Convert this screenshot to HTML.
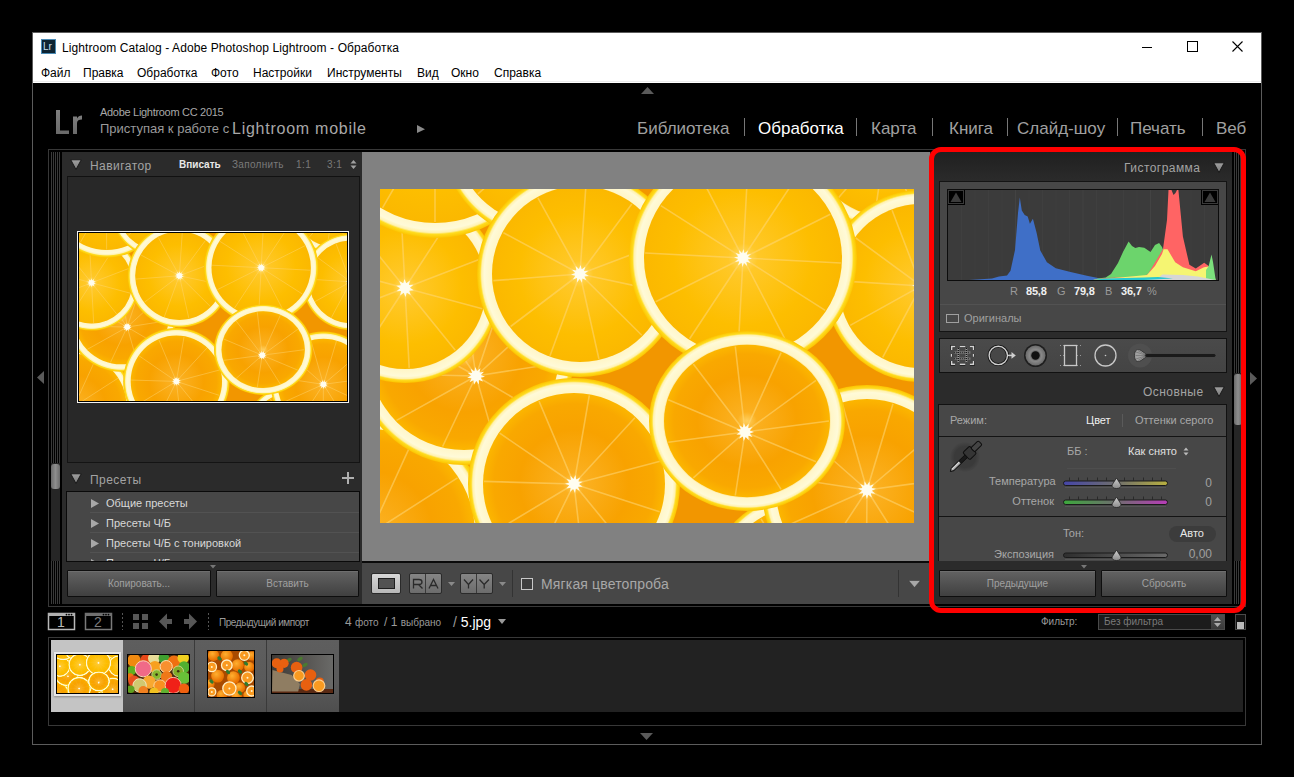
<!DOCTYPE html>
<html><head><meta charset="utf-8">
<style>
*{box-sizing:border-box;margin:0;padding:0}
html,body{width:1294px;height:777px;overflow:hidden;background:#000;font-family:"Liberation Sans",sans-serif}
.a{position:absolute}
.t{position:absolute;white-space:nowrap;line-height:1}
.btn{background:linear-gradient(#626262,#404040);border:1px solid #0e0e0e;border-radius:1px;box-shadow:inset 0 1px 0 #6e6e6e}
.btn span{position:absolute;left:0;right:0;top:8px;text-align:center;font-size:10px;color:#a0a0a0;line-height:1}
</style></head>
<body>
<!--ORANGES-->
<svg width="0" height="0" style="position:absolute"><defs>
<radialGradient id="fl" cx="0.5" cy="0.5" r="0.5"><stop offset="0" stop-color="#ffde70"/><stop offset="0.15" stop-color="#ffc828"/><stop offset="0.7" stop-color="#fdbe00"/><stop offset="1" stop-color="#fbb800"/></radialGradient>
<radialGradient id="fl2" cx="0.5" cy="0.5" r="0.5"><stop offset="0" stop-color="#ffd060"/><stop offset="0.12" stop-color="#fbb020"/><stop offset="0.6" stop-color="#f8a200"/><stop offset="0.88" stop-color="#f9a800"/><stop offset="1" stop-color="#fcb600"/></radialGradient>
<radialGradient id="pi" cx="0.5" cy="0.5" r="0.5"><stop offset="0.82" stop-color="#fdd050"/><stop offset="0.86" stop-color="#fff6c8"/><stop offset="0.93" stop-color="#fffad8"/><stop offset="0.955" stop-color="#fff2b0"/><stop offset="0.97" stop-color="#ffdc20"/><stop offset="1" stop-color="#fcc400"/></radialGradient>
<g id="oranges"><rect width="534" height="334" fill="#f29600"/>
<g><ellipse cx="420" cy="395" rx="90" ry="90" fill="url(#pi)"/><ellipse cx="420" cy="395" rx="77.0" ry="77.0" fill="url(#fl2)"/><path d="M420.0 395.0L494.8 408.2M420.0 395.0L475.8 446.6M420.0 395.0L439.1 468.6M420.0 395.0L396.3 467.2M420.0 395.0L361.0 442.9M420.0 395.0L344.5 403.4M420.0 395.0L351.9 361.3M420.0 395.0L381.0 329.8M420.0 395.0L422.4 319.0M420.0 395.0L463.1 332.4M420.0 395.0L490.1 365.6" stroke="#ffd878" stroke-width="1.6" opacity="0.55"/><polygon points="428.9,396.6 424.5,397.2 426.6,401.1 422.6,399.3 422.3,403.7 419.8,400.0 417.2,403.6 417.2,399.1 413.0,400.7 415.4,396.9 411.1,396.0 415.1,394.1 411.9,391.0 416.3,391.6 415.4,387.3 418.7,390.2 420.3,386.0 421.6,390.2 425.1,387.6 423.9,391.8 428.3,391.5 425.0,394.4" fill="#fffbe8"/><circle cx="420" cy="395" r="5" fill="#fffdf0"/></g>
<g><ellipse cx="-10" cy="345" rx="120" ry="120" fill="url(#pi)"/><ellipse cx="-10" cy="345" rx="105.0" ry="105.0" fill="url(#fl2)"/><path d="M-10.0 345.0L94.0 345.0M-10.0 345.0L77.5 401.2M-10.0 345.0L33.2 439.6M-10.0 345.0L-24.8 447.9M-10.0 345.0L-78.1 423.6M-10.0 345.0L-109.8 374.3M-10.0 345.0L-109.8 315.7M-10.0 345.0L-78.1 266.4M-10.0 345.0L-24.8 242.1M-10.0 345.0L33.2 250.4M-10.0 345.0L77.5 288.8" stroke="#ffd878" stroke-width="1.6" opacity="0.55"/><polygon points="-1.0,345.0 -5.2,346.4 -2.4,349.9 -6.7,348.8 -6.3,353.2 -9.3,349.9 -11.3,353.9 -12.1,349.5 -15.9,351.8 -14.2,347.7 -18.6,347.5 -15.0,345.0 -18.6,342.5 -14.2,342.3 -15.9,338.2 -12.1,340.5 -11.3,336.1 -9.3,340.1 -6.3,336.8 -6.7,341.2 -2.4,340.1 -5.2,343.6" fill="#fffbe8"/><circle cx="-10" cy="345" r="5" fill="#fffdf0"/></g>
<g><ellipse cx="84" cy="166" rx="110" ry="110" fill="url(#pi)"/><ellipse cx="84" cy="166" rx="95.0" ry="95.0" fill="url(#fl2)"/><path d="M96.0 187.0L177.6 174.2M96.0 187.0L158.3 223.5M96.0 187.0L115.4 254.6M96.0 187.0L62.6 257.5M96.0 187.0L16.5 231.4M96.0 187.0L-8.2 184.5M96.0 187.0L-3.5 131.8M96.0 187.0L28.9 89.9M96.0 187.0L78.8 72.1M96.0 187.0L130.4 84.2M96.0 187.0L167.2 122.3" stroke="#ffd878" stroke-width="1.6" opacity="0.55"/><polygon points="105.0,187.8 100.7,188.8 103.1,192.5 98.9,191.0 99.0,195.5 96.3,192.0 93.9,195.8 93.5,191.3 89.5,193.3 91.6,189.3 87.2,188.8 91.0,186.6 87.6,183.7 92.0,183.9 90.7,179.7 94.3,182.3 95.5,178.0 97.1,182.1 100.4,179.2 99.6,183.5 104.0,182.8 100.9,186.0" fill="#fffbe8"/><circle cx="96" cy="187" r="5" fill="#fffdf0"/></g>
<g><ellipse cx="25" cy="99" rx="95" ry="95" fill="url(#pi)"/><ellipse cx="25" cy="99" rx="81.0" ry="81.0" fill="url(#fl)"/><path d="M25.0 99.0L102.3 119.7M25.0 99.0L75.3 161.2M25.0 99.0L29.2 178.9M25.0 99.0L-18.6 166.1M25.0 99.0L-49.7 127.7M25.0 99.0L-52.3 78.3M25.0 99.0L-25.3 36.8M25.0 99.0L20.8 19.1M25.0 99.0L68.6 31.9M25.0 99.0L99.7 70.3" stroke="#ffd878" stroke-width="1.6" opacity="0.55"/><polygon points="33.7,101.3 29.2,101.7 30.7,106.0 26.8,103.7 25.5,108.0 23.7,103.8 20.1,106.5 21.1,102.1 16.6,102.2 20.0,99.3 16.3,96.7 20.8,96.3 19.3,92.0 23.2,94.3 24.5,90.0 26.3,94.2 29.9,91.5 28.9,95.9 33.4,95.8 30.0,98.7" fill="#fffbe8"/><circle cx="25" cy="99" r="5" fill="#fffdf0"/></g>
<g><ellipse cx="55" cy="-72" rx="121" ry="121" fill="url(#pi)"/><ellipse cx="55" cy="-72" rx="106.0" ry="106.0" fill="url(#fl)"/><path d="M55.0 -72.0L160.0 -72.0M55.0 -72.0L145.9 -19.5M55.0 -72.0L107.5 18.9M55.0 -72.0L55.0 33.0M55.0 -72.0L2.5 18.9M55.0 -72.0L-35.9 -19.5M55.0 -72.0L-50.0 -72.0M55.0 -72.0L-35.9 -124.5M55.0 -72.0L2.5 -162.9M55.0 -72.0L55.0 -177.0M55.0 -72.0L107.5 -162.9M55.0 -72.0L145.9 -124.5" stroke="#ffd878" stroke-width="1.6" opacity="0.55"/><polygon points="64.0,-72.0 59.8,-70.7 62.8,-67.5 58.5,-68.5 59.5,-64.2 56.3,-67.2 55.0,-63.0 53.7,-67.2 50.5,-64.2 51.5,-68.5 47.2,-67.5 50.2,-70.7 46.0,-72.0 50.2,-73.3 47.2,-76.5 51.5,-75.5 50.5,-79.8 53.7,-76.8 55.0,-81.0 56.3,-76.8 59.5,-79.8 58.5,-75.5 62.8,-76.5 59.8,-73.3" fill="#fffbe8"/><circle cx="55" cy="-72" r="5" fill="#fffdf0"/></g>
<g><ellipse cx="162" cy="-51" rx="100" ry="100" fill="url(#pi)"/><ellipse cx="162" cy="-51" rx="86.0" ry="86.0" fill="url(#fl)"/><path d="M162.0 -51.0L246.2 -39.2M162.0 -51.0L226.4 4.5M162.0 -51.0L186.2 30.5M162.0 -51.0L138.3 30.6M162.0 -51.0L97.9 4.9M162.0 -51.0L77.9 -38.6M162.0 -51.0L84.6 -86.1M162.0 -51.0L115.8 -122.4M162.0 -51.0L161.7 -136.0M162.0 -51.0L207.7 -122.7M162.0 -51.0L239.2 -86.6" stroke="#ffd878" stroke-width="1.6" opacity="0.55"/><polygon points="170.9,-49.7 166.6,-48.9 168.8,-45.1 164.7,-46.8 164.6,-42.4 162.0,-46.0 159.5,-42.4 159.3,-46.8 155.2,-45.1 157.5,-48.9 153.1,-49.7 157.0,-51.7 153.8,-54.7 158.2,-54.3 157.1,-58.6 160.6,-55.8 162.0,-60.0 163.4,-55.8 166.8,-58.6 165.8,-54.3 170.2,-54.8 166.9,-51.7" fill="#fffbe8"/><circle cx="162" cy="-51" r="5" fill="#fffdf0"/></g>
<g><ellipse cx="200" cy="85" rx="103" ry="103" fill="url(#pi)"/><ellipse cx="200" cy="85" rx="88.0" ry="88.0" fill="url(#fl)"/><path d="M200.0 85.0L285.1 103.1M200.0 85.0L261.8 146.2M200.0 85.0L218.9 169.9M200.0 85.0L170.0 166.7M200.0 85.0L130.6 137.5M200.0 85.0L113.3 91.6M200.0 85.0L123.4 43.7M200.0 85.0L157.9 8.8M200.0 85.0L205.8 -1.8M200.0 85.0L251.8 15.1M200.0 85.0L281.4 54.2" stroke="#ffd878" stroke-width="1.6" opacity="0.55"/><polygon points="208.8,86.9 204.4,87.4 206.4,91.3 202.4,89.4 202.0,93.8 199.7,90.0 196.9,93.4 197.0,89.0 192.8,90.4 195.3,86.8 191.0,85.7 195.1,84.0 192.1,80.7 196.4,81.5 195.6,77.1 198.9,80.1 200.6,76.0 201.7,80.3 205.4,77.8 204.0,82.0 208.4,81.8 205.0,84.6" fill="#fffbe8"/><circle cx="200" cy="85" r="5" fill="#fffdf0"/></g>
<g><ellipse cx="505" cy="-45" rx="85" ry="85" fill="url(#pi)"/><ellipse cx="505" cy="-45" rx="72.0" ry="72.0" fill="url(#fl)"/><path d="M505.0 -45.0L576.0 -45.0M505.0 -45.0L564.7 -6.6M505.0 -45.0L534.5 19.6M505.0 -45.0L494.9 25.3M505.0 -45.0L458.5 8.7M505.0 -45.0L436.9 -25.0M505.0 -45.0L436.9 -65.0M505.0 -45.0L458.5 -98.7M505.0 -45.0L494.9 -115.3M505.0 -45.0L534.5 -109.6M505.0 -45.0L564.7 -83.4" stroke="#ffd878" stroke-width="1.6" opacity="0.55"/><polygon points="514.0,-45.0 509.8,-43.6 512.6,-40.1 508.3,-41.2 508.7,-36.8 505.7,-40.1 503.7,-36.1 502.9,-40.5 499.1,-38.2 500.8,-42.3 496.4,-42.5 500.0,-45.0 496.4,-47.5 500.8,-47.7 499.1,-51.8 502.9,-49.5 503.7,-53.9 505.7,-49.9 508.7,-53.2 508.3,-48.8 512.6,-49.9 509.8,-46.4" fill="#fffbe8"/><circle cx="505" cy="-45" r="5" fill="#fffdf0"/></g>
<g><ellipse cx="541" cy="97" rx="96" ry="96" fill="url(#pi)"/><ellipse cx="541" cy="97" rx="82.0" ry="82.0" fill="url(#fl)"/><path d="M541.0 97.0L617.1 124.7M541.0 97.0L590.1 161.5M541.0 97.0L547.4 177.7M541.0 97.0L502.7 168.4M541.0 97.0L470.2 136.4M541.0 97.0L460.2 91.9M541.0 97.0L475.8 49.0M541.0 97.0L512.1 21.3M541.0 97.0L557.6 17.7M541.0 97.0L597.8 39.3M541.0 97.0L620.0 79.2" stroke="#ffd878" stroke-width="1.6" opacity="0.55"/><polygon points="549.5,100.1 545.0,100.0 546.5,104.2 542.8,101.7 541.7,106.0 540.0,101.9 536.7,104.9 537.5,100.6 533.1,101.4 536.1,98.1 532.0,96.4 536.3,95.3 533.8,91.7 538.0,93.0 537.8,88.6 540.6,92.0 542.8,88.2 543.4,92.6 547.3,90.6 545.4,94.6 549.8,95.0 546.0,97.3" fill="#fffbe8"/><circle cx="541" cy="97" r="5" fill="#fffdf0"/></g>
<g><ellipse cx="363" cy="69" rx="114" ry="112" fill="url(#pi)"/><ellipse cx="363" cy="69" rx="99.0" ry="97.3" fill="url(#fl)"/><path d="M363.0 69.0L460.9 74.0M363.0 69.0L445.2 121.4M363.0 69.0L407.5 154.8M363.0 69.0L357.9 165.1M363.0 69.0L309.6 149.7M363.0 69.0L275.7 112.7M363.0 69.0L265.1 64.0M363.0 69.0L280.8 16.6M363.0 69.0L318.5 -16.8M363.0 69.0L368.1 -27.1M363.0 69.0L416.4 -11.7M363.0 69.0L450.3 25.3" stroke="#ffd878" stroke-width="1.6" opacity="0.55"/><polygon points="372.0,69.5 367.8,70.5 370.5,73.9 366.3,72.7 367.1,77.0 364.0,73.9 362.5,78.0 361.5,73.8 358.1,76.5 359.3,72.3 355.0,73.1 358.1,70.0 354.0,68.5 358.2,67.5 355.5,64.1 359.7,65.3 358.9,61.0 362.0,64.1 363.5,60.0 364.5,64.2 367.9,61.5 366.7,65.7 371.0,64.9 367.9,68.0" fill="#fffbe8"/><circle cx="363" cy="69" r="5" fill="#fffdf0"/></g>
<g><ellipse cx="487" cy="301" rx="105" ry="105" fill="url(#pi)"/><ellipse cx="487" cy="301" rx="91.0" ry="91.0" fill="url(#fl2)"/><path d="M487.0 301.0L568.6 339.0M487.0 301.0L535.1 377.1M487.0 301.0L486.3 391.0M487.0 301.0L437.7 376.3M487.0 301.0L404.8 337.7M487.0 301.0L398.0 287.5M487.0 301.0L419.5 241.5M487.0 301.0L462.3 214.4M487.0 301.0L513.0 214.8M487.0 301.0L555.5 242.6M487.0 301.0L576.2 288.9" stroke="#ffd878" stroke-width="1.6" opacity="0.55"/><polygon points="495.2,304.8 490.8,304.3 491.8,308.6 488.4,305.8 486.9,310.0 485.6,305.8 482.1,308.5 483.2,304.2 478.8,304.7 482.0,301.7 478.1,299.6 482.5,298.9 480.2,295.1 484.3,296.8 484.5,292.3 487.0,296.0 489.6,292.4 489.7,296.8 493.8,295.2 491.6,299.0 495.9,299.8 491.9,301.8" fill="#fffbe8"/><circle cx="487" cy="301" r="5" fill="#fffdf0"/></g>
<g><ellipse cx="194" cy="295" rx="106" ry="106" fill="url(#pi)"/><ellipse cx="194" cy="295" rx="91.0" ry="91.0" fill="url(#fl2)"/><path d="M194.0 295.0L279.6 322.8M194.0 295.0L251.0 364.7M194.0 295.0L204.3 384.4M194.0 295.0L154.3 375.8M194.0 295.0L116.9 341.5M194.0 295.0L104.0 292.4M194.0 295.0L119.7 244.2M194.0 295.0L159.0 212.1M194.0 295.0L209.3 206.3M194.0 295.0L254.9 228.7M194.0 295.0L281.0 272.1" stroke="#ffd878" stroke-width="1.6" opacity="0.55"/><polygon points="202.6,297.8 198.1,297.8 199.7,302.0 195.9,299.6 195.0,303.9 193.1,299.9 190.0,303.1 190.6,298.7 186.3,299.6 189.2,296.3 185.0,294.7 189.2,293.5 186.6,289.9 190.8,291.1 190.5,286.7 193.4,290.0 195.5,286.1 196.2,290.5 200.1,288.4 198.3,292.4 202.7,292.7 199.0,295.1" fill="#fffbe8"/><circle cx="194" cy="295" r="5" fill="#fffdf0"/></g>
<g><ellipse cx="367" cy="232" rx="98" ry="90" fill="url(#pi)"/><ellipse cx="367" cy="232" rx="83.0" ry="76.2" fill="url(#fl2)"/><path d="M365.0 243.0L449.0 232.0M365.0 243.0L436.0 272.7M365.0 243.0L401.1 300.4M365.0 243.0L355.3 306.5M365.0 243.0L313.3 288.9M365.0 243.0L288.3 253.2M365.0 243.0L288.3 210.8M365.0 243.0L313.3 175.1M365.0 243.0L355.3 157.5M365.0 243.0L401.1 163.6M365.0 243.0L436.0 191.3" stroke="#ffd878" stroke-width="1.6" opacity="0.55"/><polygon points="374.0,243.0 369.8,244.4 372.6,247.9 368.3,246.8 368.7,251.2 365.7,247.9 363.7,251.9 362.9,247.5 359.1,249.8 360.8,245.7 356.4,245.5 360.0,243.0 356.4,240.5 360.8,240.3 359.1,236.2 362.9,238.5 363.7,234.1 365.7,238.1 368.7,234.8 368.3,239.2 372.6,238.1 369.8,241.6" fill="#fffbe8"/><circle cx="365" cy="243" r="5" fill="#fffdf0"/></g>
</g></defs></svg>
<!--/ORANGES-->
<!-- window frame -->
<div class="a" style="left:32px;top:32px;width:1230px;height:713px;border:1px solid #5c5c5c;background:#000"></div>
<!-- title + menu -->
<div class="a" style="left:33px;top:33px;width:1228px;height:50px;background:#fff"></div><div class="a" style="left:33px;top:81px;width:1228px;height:1px;background:#ececec"></div>
<!-- title bar -->
<div class="a" style="left:41px;top:39px;width:15px;height:15px;background:#0e2433;border:1px solid #4a8bb5"></div>
<div class="t" style="left:43px;top:42px;font-size:10px;color:#c8e0f0">Lr</div>
<div class="t" style="left:62px;top:42px;font-size:12px;letter-spacing:0.1px;color:#000">Lightroom Catalog - Adobe Photoshop Lightroom - Обработка</div>
<div class="a" style="left:1142px;top:47px;width:10px;height:1px;background:#000"></div>
<div class="a" style="left:1187px;top:41px;width:11px;height:11px;border:1px solid #000"></div>
<svg class="a" style="left:1232px;top:41px" width="11" height="11"><path d="M0.5 0.5L10.5 10.5M10.5 0.5L0.5 10.5" stroke="#000" stroke-width="1.1"/></svg>
<!-- menu -->
<div class="t" style="left:41px;top:67px;font-size:12px;color:#000">Файл</div>
<div class="t" style="left:83px;top:67px;font-size:12px;color:#000">Правка</div>
<div class="t" style="left:137px;top:67px;font-size:12px;color:#000">Обработка</div>
<div class="t" style="left:211px;top:67px;font-size:12px;color:#000">Фото</div>
<div class="t" style="left:253px;top:67px;font-size:12px;color:#000">Настройки</div>
<div class="t" style="left:327px;top:67px;font-size:12px;color:#000">Инструменты</div>
<div class="t" style="left:417px;top:67px;font-size:12px;color:#000">Вид</div>
<div class="t" style="left:451px;top:67px;font-size:12px;color:#000">Окно</div>
<div class="t" style="left:494px;top:67px;font-size:12px;color:#000">Справка</div>
<!-- header -->
<svg class="a" style="left:641px;top:87px" width="13" height="7"><path d="M6.5 0L13 7H0z" fill="#5a5a5a"/></svg>
<svg class="a" style="left:55px;top:109px" width="28" height="26"><defs><linearGradient id="lrg" x1="0" y1="0" x2="0" y2="1"><stop offset="0" stop-color="#7e7e7e"/><stop offset="1" stop-color="#6a6a6a"/></linearGradient></defs><path d="M1 1H5V21.5H14V25H1z" fill="url(#lrg)"/><path d="M18 7.5H22V9.5C23 7.5 24.5 6.5 27 6.5V10.5C24 10.5 22 11.5 22 14V25H18z" fill="url(#lrg)"/></svg>
<div class="t" style="left:100px;top:107px;font-size:11px;color:#a8a8a8;letter-spacing:-0.3px">Adobe Lightroom CC 2015</div>
<div class="t" style="left:100px;top:122px;font-size:13px;color:#9a9a9a">Приступая к работе с</div>
<div class="t" style="left:232px;top:121px;font-size:16px;letter-spacing:0.75px;color:#a8a8a8">Lightroom mobile</div>
<svg class="a" style="left:417px;top:125px" width="8" height="8"><path d="M0 0L8 4.2L0 8z" fill="#8a8a8a"/></svg>
<!-- module picker -->
<div class="t" style="left:637px;top:120px;font-size:17px;color:#a0a0a0">Библиотека</div>
<div class="a" style="left:744px;top:118px;width:1px;height:18px;background:#777"></div>
<div class="t" style="left:758px;top:120px;font-size:17px;color:#fff">Обработка</div>
<div class="a" style="left:856px;top:118px;width:1px;height:18px;background:#777"></div>
<div class="t" style="left:871px;top:120px;font-size:17px;color:#a0a0a0">Карта</div>
<div class="a" style="left:932px;top:118px;width:1px;height:18px;background:#777"></div>
<div class="t" style="left:949px;top:120px;font-size:17px;color:#a0a0a0">Книга</div>
<div class="a" style="left:1007px;top:118px;width:1px;height:18px;background:#777"></div>
<div class="t" style="left:1017px;top:120px;font-size:17px;color:#a0a0a0">Слайд-шоу</div>
<div class="a" style="left:1117px;top:118px;width:1px;height:18px;background:#777"></div>
<div class="t" style="left:1130px;top:120px;font-size:17px;color:#a0a0a0">Печать</div>
<div class="a" style="left:1202px;top:118px;width:1px;height:18px;background:#777"></div>
<div class="t" style="left:1216px;top:120px;font-size:17px;color:#a0a0a0">Веб</div>
<!-- panels frame -->
<div class="a" style="left:48px;top:149px;width:1198px;height:458px;border:1px solid #383838"></div>
<!-- left strip -->
<div class="a" style="left:51px;top:152px;width:9px;height:311px;background:repeating-linear-gradient(90deg,#3a3a3a 0 1px,#000 1px 2px)"></div>
<div class="a" style="left:51px;top:463px;width:9px;height:98px;background:#262626"></div>
<div class="a" style="left:51px;top:464px;width:9px;height:25px;border-radius:3px;background:linear-gradient(90deg,#6a6a6a,#8e8e8e 50%,#6a6a6a)"></div>
<div class="a" style="left:51px;top:561px;width:9px;height:43px;background:repeating-linear-gradient(90deg,#3a3a3a 0 1px,#000 1px 2px)"></div>
<!-- left panel -->
<div class="a" style="left:62px;top:152px;width:300px;height:452px;background:#2b2b2b"></div>
<svg class="a" style="left:70px;top:159px" width="12" height="11"><path d="M0.8 0.8H11.2L6 10.5z" fill="url(#tg)" stroke="#151515" stroke-width="0.9"/><defs><linearGradient id="tg" x1="0" y1="0" x2="0" y2="1"><stop offset="0" stop-color="#a0a0a0"/><stop offset="1" stop-color="#7a7a7a"/></linearGradient></defs></svg>
<div class="t" style="left:90px;top:160px;font-size:12px;color:#a3a3a3;letter-spacing:0.45px">Навигатор</div>
<div class="t" style="left:179px;top:160px;font-size:10px;font-weight:bold;color:#e8e8e8">Вписать</div>
<div class="t" style="left:232px;top:160px;font-size:10px;color:#7a7a7a;letter-spacing:0.3px">Заполнить</div>
<div class="t" style="left:296px;top:160px;font-size:10px;color:#7a7a7a;letter-spacing:0.5px">1:1</div>
<div class="t" style="left:327px;top:160px;font-size:10px;color:#7a7a7a;letter-spacing:0.5px">3:1</div>
<svg class="a" style="left:350px;top:160px" width="7" height="9"><path d="M3.5 0L6.5 3.5H0.5zM3.5 9L6.5 5.5H0.5z" fill="#a0a0a0"/></svg>
<div class="a" style="left:67px;top:176px;width:293px;height:287px;background:#282828;border:1px solid #141414;border-top-color:#111"></div>
<div class="a" style="left:77px;top:231px;width:272px;height:172px;border:1px solid #f4f4f4;background:#000;padding:1px;overflow:hidden"><svg style="display:block" width="268" height="168" viewBox="0 0 534 334" preserveAspectRatio="none"><use href="#oranges"/></svg></div>
<svg class="a" style="left:70px;top:473px" width="12" height="11"><path d="M0.8 0.8H11.2L6 10.5z" fill="url(#tg)" stroke="#151515" stroke-width="0.9"/></svg>
<div class="t" style="left:90px;top:474px;font-size:12px;color:#a3a3a3;letter-spacing:0.45px">Пресеты</div>
<svg class="a" style="left:342px;top:472px" width="12" height="12"><path d="M6 0V12M0 6H12" stroke="#b0b0b0" stroke-width="2"/></svg>
<div class="a" style="left:66px;top:491px;width:294px;height:71px;background:#474747;border:1px solid #0a0a0a;overflow:hidden">
 <div class="a" style="left:23px;top:20px;width:270px;height:1px;background:#525252"></div>
 <div class="a" style="left:23px;top:40px;width:270px;height:1px;background:#525252"></div>
 <div class="a" style="left:23px;top:60px;width:270px;height:1px;background:#525252"></div>
 <svg class="a" style="left:24px;top:7px" width="8" height="9"><path d="M0 0L8 4.5L0 9z" fill="#a8a8a8"/></svg>
 <svg class="a" style="left:24px;top:27px" width="8" height="9"><path d="M0 0L8 4.5L0 9z" fill="#a8a8a8"/></svg>
 <svg class="a" style="left:24px;top:47px" width="8" height="9"><path d="M0 0L8 4.5L0 9z" fill="#a8a8a8"/></svg>
 <svg class="a" style="left:24px;top:67px" width="8" height="9"><path d="M0 0L8 4.5L0 9z" fill="#a8a8a8"/></svg>
 <div class="t" style="left:39px;top:6px;font-size:11px;color:#d8d8d8">Общие пресеты</div>
 <div class="t" style="left:39px;top:26px;font-size:11px;color:#d8d8d8">Пресеты Ч/Б</div>
 <div class="t" style="left:39px;top:46px;font-size:11px;color:#d8d8d8">Пресеты Ч/Б с тонировкой</div>
 <div class="t" style="left:39px;top:66px;font-size:11px;color:#d8d8d8">Пресеты Ч/Б тон</div>
</div>
<svg class="a" style="left:210px;top:565px" width="6" height="4"><path d="M0 0H6L3 3.5z" fill="#777"/></svg>
<div class="a btn" style="left:67px;top:570px;width:144px;height:27px"><span>Копировать...</span></div>
<div class="a btn" style="left:216px;top:570px;width:143px;height:27px"><span>Вставить</span></div>
<!-- center -->
<div class="a" style="left:362px;top:152px;width:568px;height:409px;background:#818181"></div>
<div class="a" id="mainimg" style="left:380px;top:189px;width:534px;height:334px;background:#f5a300;overflow:hidden"><svg width="534" height="334" viewBox="0 0 534 334"><use href="#oranges"/></svg></div>
<div class="a" style="left:362px;top:561px;width:568px;height:2px;background:#0a0a0a"></div>
<div class="a" style="left:362px;top:563px;width:568px;height:41px;background:#474747"></div>
<div class="a" style="left:371px;top:573px;width:30px;height:21px;border-radius:2px;background:linear-gradient(#d6d6d6,#b8b8b8);border:1px solid #2a2a2a"><div class="a" style="left:6px;top:4px;width:17px;height:11px;background:#525252;border:1px solid #1e1e1e"></div></div>
<div class="a" style="left:409px;top:573px;width:33px;height:21px;border-radius:2px;background:linear-gradient(#858585,#6c6c6c);border:1px solid #2a2a2a"><div class="a" style="left:15px;top:0;width:1px;height:19px;background:#3a3a3a"></div></div>


<svg class="a" style="left:448px;top:582px" width="7" height="4"><path d="M0 0H7L3.5 4z" fill="#8a8a8a"/></svg>
<div class="a" style="left:460px;top:573px;width:33px;height:21px;border-radius:2px;background:linear-gradient(#858585,#6c6c6c);border:1px solid #2a2a2a"><div class="a" style="left:15px;top:0;width:1px;height:19px;background:#3a3a3a"></div></div>


<svg class="a" style="left:499px;top:582px" width="7" height="4"><path d="M0 0H7L3.5 4z" fill="#8a8a8a"/></svg>
<svg class="a" style="left:0;top:0" width="500" height="600"><path d="M413.5 588.5V579.5H419C421 579.5 422 580.5 422 582C422 583.5 421 584.5 419 584.5H413.5M418.5 584.5L422.5 588.5M429 588.5L433.5 579.5L438 588.5M430.8 585.5H436.2M464 579.5L468.5 584.5V588.5M473 579.5L468.5 584.5M479.5 579.5L484.2 584.5V588.5M489 579.5L484.2 584.5" fill="none" stroke="#2a2a2a" stroke-width="1.3"/></svg>
<div class="a" style="left:512px;top:570px;width:1px;height:27px;background:#333"></div>
<div class="a" style="left:521px;top:578px;width:12px;height:12px;border:1px solid #c8c8c8;background:#3e3e3e"></div>
<div class="t" style="left:541px;top:577px;font-size:14px;color:#a8a8a8;letter-spacing:0.15px">Мягкая цветопроба</div>
<div class="a" style="left:898px;top:570px;width:1px;height:27px;background:#333"></div>
<svg class="a" style="left:908px;top:580px" width="13" height="8"><path d="M0.5 0.5H12.5L6.5 7.5z" fill="#a8a8a8" stroke="#333" stroke-width="0.5"/></svg>
<!-- right panel -->
<div class="a" style="left:930px;top:152px;width:302px;height:452px;background:linear-gradient(#202020,#2b2b2b 30px)"></div>
<div class="a" style="left:1234px;top:152px;width:8px;height:221px;background:repeating-linear-gradient(90deg,#3a3a3a 0 1px,#000 1px 2px)"></div>
<div class="a" style="left:1234px;top:373px;width:8px;height:188px;background:#262626"></div>
<div class="a" style="left:1234px;top:374px;width:8px;height:51px;border-radius:3px;background:linear-gradient(90deg,#6a6a6a,#8e8e8e 50%,#6a6a6a)"></div>
<div class="a" style="left:1234px;top:561px;width:8px;height:43px;background:repeating-linear-gradient(90deg,#3a3a3a 0 1px,#000 1px 2px)"></div>
<!-- histogram header -->
<div class="t" style="left:1124px;top:162px;font-size:12px;color:#a3a3a3;letter-spacing:0.45px">Гистограмма</div>
<svg class="a" style="left:1213px;top:162px" width="12" height="11"><path d="M0.8 0.8H11.2L6 10.5z" fill="url(#tg)" stroke="#151515" stroke-width="0.9"/></svg>
<div class="a" style="left:939px;top:181px;width:288px;height:151px;background:#474747;border:1px solid #141414"></div>
<div class="a" style="left:947px;top:189px;width:272px;height:92px;border:1px solid #0c0c0c;background:#3b3b3b;overflow:hidden">
<svg width="270" height="90" style="position:absolute;left:0;top:0">
 <g stroke="#3f3f3f" stroke-width="1">
  <path d="M13.5 0V90M27 0V90M40.5 0V90M54 0V90M81 0V90M94.5 0V90M108 0V90M121.5 0V90M148.5 0V90M162 0V90M175.5 0V90M189 0V90M216 0V90M229.5 0V90M243 0V90M256.5 0V90"/>
 </g>
 <g stroke="#434343" stroke-width="1"><path d="M67.5 0V90M135 0V90M202.5 0V90"/></g>
 <path d="M21 90L44 88.5L51 86.5L59 85.5L62.5 80.7L67 60L70 23L71.8 7.5L73.8 20.5L76.7 25L79.7 26.4L81.9 33.8L84.9 28.7L88.6 42.7L92.3 60.5L98.9 72.3L107.8 78.3L122.6 82L138.9 85.7L150 88L158 89L165 90z" fill="#3f6fc7"/>
 <path d="M145 90L150 88.5L157.7 87.5L163 84L170 73L175 62L180.6 51.6L184 56L187.3 58L191 57L196.3 57.8L202.5 61.9L207 55L211.1 52.9L214 57L216 62L216 90z" fill="#6cd46c"/>
 <path d="M145 90L158 88L170 87.5L196 86L200 84L215 59L219 30L220.5 0H223.5L225.5 5L227.5 3L229 0H230.4L234.9 46.5L241.4 74.8L247.8 78.6L256.2 72.8L260.7 76L260.7 90z" fill="#ff6464"/>
 <path d="M145 90L199 85L207 76L214 64L215.6 59.3L219.5 59.3L227.2 72.2L234.9 77.3L247.8 81.2L256 77.3L260.7 76.5L264 80L267.7 90z" fill="#f5f572"/>
 <path d="M258 80L260.7 76L263.5 64.5L265 72L267.7 90L258 90z" fill="#7ce07c"/>
 <path d="M196 90L210 88L214.3 84.4L235 85L250 86.5L267 90z" fill="#d6d6d6"/>
 <path d="M145 90L157 88.5L196 87.5L210 87L225 88.5L196 90z" fill="#28c8d0"/>
</svg>
 <div class="a" style="left:0;top:0;width:16px;height:14px;border:1px solid #3a3a3a;outline:1px solid #000;background:#000"><svg class="a" style="left:1px;top:1px" width="12" height="10"><path d="M6 0.5L11.5 10H0.5z" fill="#3c3c3c"/></svg></div>
 <div class="a" style="right:0;top:0;width:16px;height:14px;border:1px solid #3a3a3a;outline:1px solid #000;background:#000"><svg class="a" style="left:1px;top:1px" width="12" height="10"><path d="M6 0.5L11.5 10H0.5z" fill="#3c3c3c"/></svg></div>
</div>
<div class="t" style="left:1010px;top:286px;font-size:11px;color:#9a9a9a">R</div>
<div class="t" style="left:1026px;top:286px;font-size:11px;color:#f0f0f0;font-weight:bold;letter-spacing:-0.2px">85,8</div>
<div class="t" style="left:1057px;top:286px;font-size:11px;color:#9a9a9a">G</div>
<div class="t" style="left:1074px;top:286px;font-size:11px;color:#f0f0f0;font-weight:bold;letter-spacing:-0.2px">79,8</div>
<div class="t" style="left:1105px;top:286px;font-size:11px;color:#9a9a9a">B</div>
<div class="t" style="left:1121px;top:286px;font-size:11px;color:#f0f0f0;font-weight:bold;letter-spacing:-0.2px">36,7</div>
<div class="t" style="left:1147px;top:286px;font-size:11px;color:#9a9a9a">%</div>
<div class="a" style="left:940px;top:304px;width:286px;height:1px;background:#525252"></div>
<div class="a" style="left:946px;top:314px;width:13px;height:9px;border:1px solid #a0a0a0"></div>
<div class="t" style="left:964px;top:313px;font-size:11px;color:#a0a0a0">Оригиналы</div>
<!-- tool strip -->
<div class="a" style="left:939px;top:338px;width:288px;height:35px;background:linear-gradient(#4a4a4a,#444);border:1px solid #111"></div>
<svg class="a" style="left:939px;top:338px" width="288" height="35">
 <g fill="none" stroke-linecap="butt">
  <path d="M12.7 12.1V8.4H16.1M20.8 8.4H26.3M30.9 8.4H34.4V12.1M12.4 15.9V18.8M34.4 15.9V18.8M12.7 22.9V26.3H16.1M20.8 26.3H26.3M30.9 26.3H34.4V22.9" stroke="#1a1a1a" stroke-width="2.8"/>
  <path d="M12.7 12.1V8.4H16.1M20.8 8.4H26.3M30.9 8.4H34.4V12.1M12.4 15.9V18.8M34.4 15.9V18.8M12.7 22.9V26.3H16.1M20.8 26.3H26.3M30.9 26.3H34.4V22.9" stroke="#d2d2d2" stroke-width="1.5"/>
  <path d="M19.3 10.1V24.6M27.4 10.1V24.6M15.3 14.5H31.5M15.3 20.6H31.5" stroke="#9a9a9a" stroke-width="1.8" stroke-linecap="butt"/>
  <path d="M19.3 10.1V24.6M27.4 10.1V24.6M15.3 14.5H31.5M15.3 20.6H31.5" stroke="#111" stroke-width="1.3" stroke-dasharray="1 1" stroke-linecap="butt"/>
 </g>
 <circle cx="59.3" cy="17.4" r="9.2" fill="#474747" stroke="#151515" stroke-width="3"/>
 <circle cx="59.3" cy="17.4" r="9.2" fill="none" stroke="#cfcfcf" stroke-width="1.4"/>
 <path d="M68.5 17.4H73.5" stroke="#cfcfcf" stroke-width="1.5"/><path d="M72.5 14L76.8 17.4L72.5 20.8z" fill="#cfcfcf"/>
 <defs><radialGradient id="iris"><stop offset="0.3" stop-color="#555"/><stop offset="0.6" stop-color="#888"/><stop offset="1" stop-color="#6a6a6a"/></radialGradient></defs>
 <circle cx="96.5" cy="17.5" r="11.5" fill="#1e1e1e"/>
 <circle cx="96.5" cy="17.5" r="10" fill="url(#iris)"/>
 <circle cx="96.5" cy="17.5" r="4.2" fill="#111"/>
 <rect x="125.5" y="7.5" width="12" height="20" fill="#444" stroke="#c8c8c8" stroke-width="1.3"/>
 <g stroke="#999" stroke-dasharray="1 2"><path d="M121 7.5H125M138 7.5H143M121 17.5H125M138 17.5H143M121 27.5H125M138 27.5H143"/></g>
 <circle cx="166.5" cy="17.5" r="10.5" fill="none" stroke="#c8c8c8" stroke-width="1.3"/>
 <circle cx="166.5" cy="17.5" r="0.8" fill="#c8c8c8"/>
 <circle cx="201" cy="17.5" r="12" fill="#4f4f4f"/>
 <path d="M195.5 17.5C195.5 11.5 199 10.5 202 12.5L207 16V19L202 22.5C199 24.5 195.5 23.5 195.5 17.5z" fill="#a0a0a0" stroke="#2a2a2a" stroke-width="0.8"/>
 <path d="M197 14L206 17M196.5 17.5H206M197 21L206 18M199 12.5L206 16.5M199 22.5L206 18.5" stroke="#666" stroke-width="0.6"/>
 <rect x="206" y="15.5" width="71" height="4" rx="2" fill="#1a1a1a" stroke="#555" stroke-width="0.6"/>
</svg>
<!-- basic -->
<div class="t" style="left:1143px;top:386px;font-size:12px;color:#a3a3a3;letter-spacing:0.45px">Основные</div>
<svg class="a" style="left:1213px;top:386px" width="12" height="11"><path d="M0.8 0.8H11.2L6 10.5z" fill="url(#tg)" stroke="#151515" stroke-width="0.9"/></svg>
<div class="a" style="left:938px;top:404px;width:289px;height:157px;background:#474747;border:1px solid #111;border-bottom:none"></div>
<div class="a" style="left:939px;top:436px;width:287px;height:1px;background:#141414"></div>
<div class="a" style="left:939px;top:516px;width:287px;height:1px;background:#141414"></div>
<div class="t" style="left:950px;top:415px;font-size:11px;color:#a8a8a8">Режим:</div>
<div class="t" style="left:1086px;top:415px;font-size:11px;color:#f0f0f0">Цвет</div>
<div class="a" style="left:1122px;top:414px;width:1px;height:13px;background:#5a5a5a"></div>
<div class="t" style="left:1135px;top:415px;font-size:11px;color:#a8a8a8">Оттенки серого</div>
<svg class="a" style="left:940px;top:435px" width="50" height="45">
 <defs><radialGradient id="edbg"><stop offset="0.7" stop-color="#3a3a3a"/><stop offset="1" stop-color="#464646"/></radialGradient><linearGradient id="edw" x1="0" y1="0" x2="0" y2="1"><stop offset="0" stop-color="#f0f0f0"/><stop offset="1" stop-color="#888"/></linearGradient></defs>
 <circle cx="25" cy="22" r="15" fill="url(#edbg)"/>
 <g transform="translate(10.4 36.5) rotate(-44)">
  <path d="M0 0L3 -1.8H24V1.8H3z" fill="#1a1a1a" stroke="#0a0a0a" stroke-width="0.8"/>
  <path d="M1 0L3.5 -1.3H13V1.3H3.5z" fill="url(#edw)"/>
  <rect x="22" y="-5" width="9.5" height="10" rx="1.5" fill="#353535" stroke="#0e0e0e" stroke-width="1"/>
  <rect x="31" y="-2.8" width="10.5" height="5.6" rx="1.5" fill="#444" stroke="#0e0e0e" stroke-width="1"/>
 </g>
</svg>
<div class="t" style="left:1067px;top:446px;font-size:11px;color:#a8a8a8">ББ :</div>
<div class="t" style="left:1128px;top:446px;font-size:11px;color:#e0e0e0">Как снято</div>
<svg class="a" style="left:1183px;top:447px" width="6" height="9"><path d="M3 0.5L5.5 3.5H0.5zM3 8.5L5.5 5.5H0.5z" fill="#bbb"/></svg>
<div class="a" style="left:1067px;top:468px;width:109px;height:1px;background:#4e4e4e"></div>
<div class="t" style="left:989px;top:476px;font-size:11px;color:#a8a8a8;text-align:right;width:65px">Температура</div>
<div class="t" style="left:989px;top:496px;font-size:11px;color:#a8a8a8;text-align:right;width:65px">Оттенок</div>
<div class="t" style="left:1063px;top:528px;font-size:11px;color:#a8a8a8">Тон:</div>
<div class="t" style="left:989px;top:549px;font-size:11px;color:#a8a8a8;text-align:right;width:65px">Экспозиция</div>
<div class="t" style="left:1150px;top:477px;font-size:12px;color:#a0a0a0;text-align:right;width:62px">0</div>
<div class="t" style="left:1150px;top:496px;font-size:12px;color:#a0a0a0;text-align:right;width:62px">0</div>
<div class="t" style="left:1150px;top:548px;font-size:12px;color:#a0a0a0;text-align:right;width:62px">0,00</div>
<svg class="a" style="left:1060px;top:475px" width="112" height="90">
 <g stroke="#2a2a2a" stroke-width="1"><path d="M9.5 2.5V5.5M18.5 2.5V5.5M27.5 2.5V5.5M37.5 2.5V5.5M46.5 2.5V5.5M64.5 2.5V5.5M73.5 2.5V5.5M83.5 2.5V5.5M92.5 2.5V5.5M101.5 2.5V5.5M9.5 21.5V24.5M18.5 21.5V24.5M27.5 21.5V24.5M37.5 21.5V24.5M46.5 21.5V24.5M64.5 21.5V24.5M73.5 21.5V24.5M83.5 21.5V24.5M92.5 21.5V24.5M101.5 21.5V24.5"/></g>
 <path d="M5 12.5H106M5 31.5H106M5 84.5H106" stroke="#565656" stroke-width="1"/>
 <defs>
  <linearGradient id="s1" x1="0" x2="1"><stop offset="0" stop-color="#4646a8"/><stop offset="0.5" stop-color="#6e6e6e"/><stop offset="1" stop-color="#b8b040"/></linearGradient>
  <linearGradient id="s2" x1="0" x2="1"><stop offset="0" stop-color="#3ca83c"/><stop offset="0.5" stop-color="#6e6e6e"/><stop offset="1" stop-color="#b83cb8"/></linearGradient>
  <linearGradient id="s3" x1="0" x2="1"><stop offset="0" stop-color="#2e2e2e"/><stop offset="1" stop-color="#6a6a6a"/></linearGradient>
  <linearGradient id="th" x1="0" y1="0" x2="0" y2="1"><stop offset="0" stop-color="#d0d0d0"/><stop offset="1" stop-color="#8a8a8a"/></linearGradient>
 </defs>
 <rect x="3.5" y="6" width="104" height="4.5" rx="2.2" fill="url(#s1)" stroke="#1a1a1a" stroke-width="1"/>
 <rect x="3.5" y="25" width="104" height="4.5" rx="2.2" fill="url(#s2)" stroke="#1a1a1a" stroke-width="1"/>
 <rect x="3.5" y="78" width="104" height="4.5" rx="2.2" fill="url(#s3)" stroke="#1a1a1a" stroke-width="1"/>
 <path d="M56.5 3L61 10A4.5 3.5 0 0 1 52 10z" fill="url(#th)" stroke="#222" stroke-width="0.8"/>
 <path d="M56.5 22L61 29A4.5 3.5 0 0 1 52 29z" fill="url(#th)" stroke="#222" stroke-width="0.8"/>
 <path d="M56.5 75L61 82A4.5 3.5 0 0 1 52 82z" fill="url(#th)" stroke="#222" stroke-width="0.8"/>
</svg>
<div class="a" style="left:1169px;top:526px;width:47px;height:16px;border-radius:8px;background:#3c3c3c"></div>
<div class="t" style="left:1180px;top:528px;font-size:11px;color:#e8e8e8">Авто</div>
<svg class="a" style="left:1081px;top:565px" width="6" height="4"><path d="M0 0H6L3 3.5z" fill="#777"/></svg>
<div class="a btn" style="left:939px;top:570px;width:157px;height:27px"><span>Предыдущие</span></div>
<div class="a btn" style="left:1101px;top:570px;width:126px;height:27px"><span>Сбросить</span></div>
<!-- red outline -->
<div class="a" style="left:929px;top:147px;width:317px;height:466px;border:5px solid #ff0000;border-radius:12px"></div>
<!-- side arrows -->
<svg class="a" style="left:37px;top:371px" width="7" height="13"><path d="M7 0V13L0 6.5z" fill="#5a5a5a"/></svg>
<svg class="a" style="left:1250px;top:372px" width="7" height="13"><path d="M0 0V13L7 6.5z" fill="#5a5a5a"/></svg>
<!-- filmstrip header -->
<svg class="a" style="left:47px;top:612px" width="160" height="20">
 <rect x="1.5" y="1.5" width="26" height="16" fill="none" stroke="#b8b8b8" stroke-width="1.5"/>
 <rect x="1" y="1" width="27" height="3" fill="#b0b0b0"/>
 <circle cx="19.5" cy="2.6" r="0.9" fill="#000"/><circle cx="22" cy="2.6" r="0.9" fill="#000"/><circle cx="24.5" cy="2.6" r="0.9" fill="#000"/>
 <rect x="38.5" y="1.5" width="26" height="16" fill="none" stroke="#7a7a7a" stroke-width="1.5"/>
 <rect x="38" y="1" width="27" height="3" fill="#707070"/>
 <circle cx="56.5" cy="2.6" r="0.9" fill="#000"/><circle cx="59" cy="2.6" r="0.9" fill="#000"/><circle cx="61.5" cy="2.6" r="0.9" fill="#000"/>
 <path d="M75.5 1V18M161.5 1V18" stroke="#555" stroke-width="1" stroke-dasharray="2 2"/>
 <path d="M86 2H92V8H86zM95 2H101V8H95zM86 11H92V17H86zM95 11H101V17H95z" fill="#575757"/>
 <path d="M112 9.5L120 1.5V7H125V12H120V17.5z" fill="#575757"/>
 <path d="M150 9.5L142 1.5V7H137V12H142V17.5z" fill="#575757"/>
</svg>
<div class="a" style="left:122px;top:613px;width:1px;height:17px;background:repeating-linear-gradient(#555 0 2px,transparent 2px 4px)"></div>
<div class="a" style="left:208px;top:613px;width:1px;height:17px;background:repeating-linear-gradient(#555 0 2px,transparent 2px 4px)"></div>
<div class="t" style="left:57px;top:615px;font-size:14px;color:#bbb">1</div>
<div class="t" style="left:94px;top:615px;font-size:14px;color:#7a7a7a">2</div>
<div class="t" style="left:219px;top:618px;font-size:10px;color:#9a9a9a;letter-spacing:-0.45px">Предыдущий импорт</div>
<div class="t" style="left:345px;top:616px;font-size:12px;color:#9a9a9a">4 <span style="font-size:10px">фото</span></div>
<div class="t" style="left:384px;top:616px;font-size:12px;color:#9a9a9a">/ 1 <span style="font-size:10px">выбрано</span></div>
<div class="t" style="left:453px;top:615px;font-size:14px;color:#9a9a9a">/ <span style="color:#fff">5.jpg</span></div>
<svg class="a" style="left:498px;top:619px" width="8" height="5"><path d="M0 0H8L4 5z" fill="#9a9a9a"/></svg>
<div class="t" style="left:1041px;top:617px;font-size:10px;color:#9a9a9a">Фильтр:</div>
<div class="a" style="left:1098px;top:614px;width:127px;height:16px;background:#1c1c1c;border:1px solid #4a4a4a"></div>
<div class="t" style="left:1104px;top:617px;font-size:10px;color:#7a7a7a">Без фильтра</div>
<div class="a" style="left:1211px;top:615px;width:13px;height:14px;background:linear-gradient(#505050,#3a3a3a)"></div>
<svg class="a" style="left:1214px;top:617px" width="7" height="10"><path d="M3.5 0L7 4H0zM3.5 10L7 6H0z" fill="#aaa"/></svg>
<div class="a" style="left:1235px;top:614px;width:11px;height:16px;border:1px solid #4a4a4a;background:#111"><div class="a" style="left:1px;top:7px;width:7px;height:7px;background:#bbb"></div></div>
<!-- filmstrip -->
<div class="a" style="left:48px;top:637px;width:1198px;height:89px;border:1px solid #383838"></div>
<div class="a" style="left:51px;top:640px;width:1192px;height:72px;background:#222"></div>
<div class="a" style="left:51px;top:640px;width:72px;height:72px;background:#c4c4c4"></div>
<div class="a" style="left:123px;top:640px;width:72px;height:72px;background:linear-gradient(#5e5e5e,#5a5a5a 60%,#4e4e4e);border-right:1px solid #3a3a3a"></div>
<div class="a" style="left:195px;top:640px;width:72px;height:72px;background:linear-gradient(#5e5e5e,#5a5a5a 60%,#4e4e4e);border-right:1px solid #3a3a3a"></div>
<div class="a" style="left:267px;top:640px;width:72px;height:72px;background:linear-gradient(#5e5e5e,#5a5a5a 60%,#4e4e4e)"></div>
<div class="a" style="left:54px;top:652px;width:67px;height:44px;background:#e8e8e8;box-shadow:0 1px 2px rgba(0,0,0,.3)"></div>
<div class="a" style="left:56px;top:654px;width:63px;height:40px;border:1px solid #000;background:#f5a300;overflow:hidden"><svg width="61" height="38" viewBox="0 0 534 334" preserveAspectRatio="none"><use href="#oranges"/></svg></div>
<div class="a" id="th2" style="left:127px;top:654px;width:63px;height:40px;border:1px solid #000;background:#2a2a2a;overflow:hidden"><svg width="61" height="38">
<rect width="61" height="38" fill="#4a2a0e"/>
<circle cx="6.1" cy="5.5" r="6.67" fill="#f08a10"/>
<circle cx="17.8" cy="4.7" r="5.4" fill="#e84818"/>
<circle cx="26.1" cy="3.3" r="6.09" fill="#e8dc98"/>
<circle cx="36" cy="3.3" r="5.4" fill="#40a030"/>
<circle cx="46" cy="7.1" r="6.67" fill="#f07010"/>
<circle cx="55.2" cy="3" r="5.75" fill="#f0d020"/>
<circle cx="3.7" cy="15.5" r="4.6" fill="#60b020"/>
<circle cx="56" cy="12.1" r="5.75" fill="#50b030"/>
<circle cx="26.9" cy="12.1" r="6.09" fill="#f8a020"/>
<circle cx="38.2" cy="11.6" r="6.09" fill="#f89030" stroke="#fce0b0" stroke-width="1"/>
<circle cx="15.3" cy="13.8" r="8.05" fill="#f06a88" stroke="#f8d8b8" stroke-width="1"/>
<circle cx="28.6" cy="19.6" r="4.83" fill="#88b830" stroke="#d8e0a0" stroke-width="0.8"/>
<circle cx="50.2" cy="16.3" r="5.29" fill="#80ac28" stroke="#d8e0a0" stroke-width="0.8"/>
<circle cx="38.6" cy="22.1" r="5.75" fill="#f07818"/>
<circle cx="56" cy="22.9" r="6.09" fill="#68c038"/>
<circle cx="2" cy="22" r="3.79" fill="#f07010"/>
<circle cx="21.1" cy="27.1" r="6.67" fill="#f8a830"/>
<circle cx="6.1" cy="26.2" r="5.75" fill="#e85020"/>
<circle cx="11.6" cy="30.4" r="6.67" fill="#d0c870" stroke="#f0e8c0" stroke-width="1"/>
<circle cx="31.9" cy="30.9" r="6.09" fill="#f89020" stroke="#fcd8a0" stroke-width="1"/>
<circle cx="45.2" cy="30.4" r="8.05" fill="#f02018" stroke="#f8c0a0" stroke-width="1"/>
<circle cx="56" cy="33.7" r="5.29" fill="#f06010"/>
<circle cx="2.8" cy="34.2" r="3.79" fill="#60a020"/>
<circle cx="15.3" cy="35.9" r="4.83" fill="#f08020"/>
<circle cx="26" cy="37" r="4.6" fill="#f0c020"/>
<circle cx="37" cy="37" r="4.02" fill="#60b030"/>
<circle cx="28.6" cy="19.6" r="1.3" fill="#3a3010"/><circle cx="50.2" cy="16.3" r="1.3" fill="#3a3010"/>
</svg></div>
<div class="a" id="th3" style="left:207px;top:650px;width:48px;height:48px;border:1px solid #000;background:#f08a10;overflow:hidden"><svg width="46" height="46">
<defs><radialGradient id="og3" cx="0.4" cy="0.35" r="0.6"><stop offset="0" stop-color="#ffb030"/><stop offset="1" stop-color="#e87000"/></radialGradient></defs>
<rect width="46" height="46" fill="#a84a00"/>
<circle cx="5.5" cy="4.3" r="5.6" fill="url(#og3)"/>
<circle cx="18.8" cy="5.1" r="6.1" fill="url(#og3)"/>
<circle cx="29.7" cy="14.3" r="6.1" fill="url(#og3)"/>
<circle cx="9.6" cy="25.1" r="6.3999999999999995" fill="url(#og3)"/>
<circle cx="25.4" cy="26.7" r="6.3999999999999995" fill="url(#og3)"/>
<circle cx="32" cy="36.7" r="5.1" fill="url(#og3)"/>
<circle cx="41.2" cy="16" r="5.1" fill="url(#og3)"/>
<circle cx="13.8" cy="44.2" r="5.1" fill="url(#og3)"/>
<circle cx="28.7" cy="45" r="5.1" fill="url(#og3)"/>
<circle cx="44" cy="5" r="4.6" fill="url(#og3)"/>
<circle cx="2" cy="33" r="4.6" fill="url(#og3)"/>
<circle cx="40" cy="44" r="4.6" fill="url(#og3)"/>
<circle cx="36.3" cy="4.3" r="5" fill="#fa9a20" stroke="#fff0c8" stroke-width="1.3"/>
<circle cx="36.3" cy="4.3" r="1" fill="#fff4d0"/>
<circle cx="18.8" cy="14.3" r="5.3" fill="#fa9a20" stroke="#fff0c8" stroke-width="1.3"/>
<circle cx="18.8" cy="14.3" r="1" fill="#fff4d0"/>
<circle cx="3.8" cy="15.9" r="4.7" fill="#fa9a20" stroke="#fff0c8" stroke-width="1.3"/>
<circle cx="3.8" cy="15.9" r="1" fill="#fff4d0"/>
<circle cx="39.5" cy="26.7" r="5.8" fill="#fa9a20" stroke="#fff0c8" stroke-width="1.3"/>
<circle cx="39.5" cy="26.7" r="1" fill="#fff4d0"/>
<circle cx="21.4" cy="37.5" r="6.6" fill="#fa9a20" stroke="#fff0c8" stroke-width="1.3"/>
<circle cx="21.4" cy="37.5" r="1" fill="#fff4d0"/>
<circle cx="43.7" cy="40" r="5" fill="#fa9a20" stroke="#fff0c8" stroke-width="1.3"/>
<circle cx="43.7" cy="40" r="1" fill="#fff4d0"/>
<circle cx="3.8" cy="40.9" r="4" fill="#fa9a20" stroke="#fff0c8" stroke-width="1.3"/>
<circle cx="3.8" cy="40.9" r="1" fill="#fff4d0"/>
<ellipse cx="11.5" cy="7.5" rx="2.5" ry="1.6" fill="#2f7a30" transform="rotate(40 11.5 7.5)"/>
<ellipse cx="38" cy="12.5" rx="2.5" ry="1.6" fill="#2f7a30" transform="rotate(40 38 12.5)"/>
<ellipse cx="32" cy="20.5" rx="2.5" ry="1.6" fill="#2f7a30" transform="rotate(40 32 20.5)"/>
<ellipse cx="3.5" cy="30.5" rx="2.5" ry="1.6" fill="#2f7a30" transform="rotate(40 3.5 30.5)"/>
<ellipse cx="38.5" cy="33" rx="2.5" ry="1.6" fill="#2f7a30" transform="rotate(40 38.5 33)"/>
<ellipse cx="32" cy="42" rx="2.5" ry="1.6" fill="#2f7a30" transform="rotate(40 32 42)"/>
<ellipse cx="20" cy="21" rx="2.5" ry="1.6" fill="#2f7a30" transform="rotate(40 20 21)"/>
</svg></div>
<div class="a" id="th4" style="left:271px;top:654px;width:63px;height:40px;border:1px solid #000;background:#5a5048;overflow:hidden"><svg width="61" height="38">
<defs><linearGradient id="bg4" x1="0" x2="1"><stop offset="0" stop-color="#3e3a36"/><stop offset="1" stop-color="#6a6a68"/></linearGradient></defs>
<rect width="61" height="38" fill="url(#bg4)"/>
<rect x="0" y="34" width="61" height="4" fill="#5a2a14"/>
<path d="M0.5 15L19.6 19.9L27.9 29L26.2 36.5H0z" fill="#8f7d62"/>
<ellipse cx="17" cy="5" rx="3" ry="1.8" fill="#4a7a30" transform="rotate(-30 17 5)"/>
<ellipse cx="28" cy="4" rx="3" ry="1.8" fill="#4a7a30" transform="rotate(-30 28 4)"/>
<ellipse cx="33" cy="10" rx="3" ry="1.8" fill="#4a7a30" transform="rotate(-30 33 10)"/>
<circle cx="4.7" cy="8.3" r="5" fill="#e86010"/>
<circle cx="12.1" cy="8.3" r="4.6" fill="#e86010"/>
<circle cx="24.6" cy="12.5" r="5.8" fill="#e86010"/>
<circle cx="38.5" cy="20" r="5.8" fill="#e86010"/>
<circle cx="34.4" cy="29.9" r="5.8" fill="#e86010"/>
<circle cx="47.8" cy="26.6" r="4" fill="#e86010"/>
<circle cx="8" cy="14" r="3.5" fill="#e86010"/>
<circle cx="27" cy="20.8" r="5.3" fill="#f89a20" stroke="#fcd090" stroke-width="1.2"/>
<circle cx="47" cy="30.7" r="5.8" fill="#f89a20" stroke="#fcd090" stroke-width="1.2"/>
</svg></div>
<svg class="a" style="left:640px;top:733px" width="13" height="7"><path d="M0 0H13L6.5 7z" fill="#5a5a5a"/></svg>
</body></html>
